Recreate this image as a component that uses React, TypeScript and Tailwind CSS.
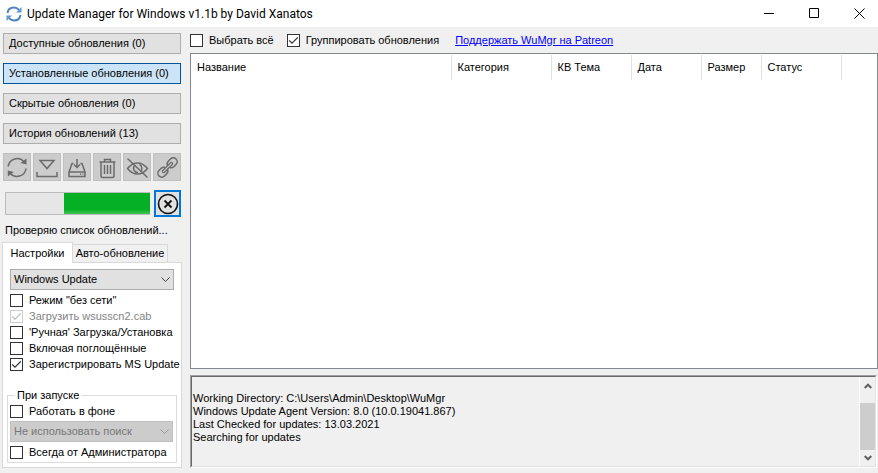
import { useState } from 'react';
import type { ReactNode } from 'react';
import clsx from 'clsx';

interface CheckProps {
  label: string;
  defaultChecked?: boolean;
  disabled?: boolean;
}

interface ToolButtonProps {
  title: string;
  children: ReactNode;
}

const views = [
  { id: 'available', label: 'Доступные обновления (0)' },
  { id: 'installed', label: 'Установленные обновления (0)' },
  { id: 'hidden', label: 'Скрытые обновления (0)' },
  { id: 'history', label: 'История обновлений (13)' },
];

const columns = [
  { label: 'Название', width: 'w-[260px]' },
  { label: 'Категория', width: 'w-[100px]' },
  { label: 'КВ Тема', width: 'w-[80px]' },
  { label: 'Дата', width: 'w-[70px]' },
  { label: 'Размер', width: 'w-[60px]' },
  { label: 'Статус', width: 'w-[80px]' },
];

const log = [
  '',
  'Working Directory: C:\\Users\\Admin\\Desktop\\WuMgr',
  'Windows Update Agent Version: 8.0 (10.0.19041.867)',
  'Last Checked for updates: 13.03.2021',
  'Searching for updates',
].join('\n');

function Check({ label, defaultChecked, disabled }: CheckProps) {
  return (
    <label className={clsx('flex h-4 items-center gap-1.5 whitespace-nowrap', disabled && 'text-[#838383]')}>
      <span className="relative h-[13px] w-[13px] shrink-0">
        <input
          type="checkbox"
          defaultChecked={defaultChecked}
          disabled={disabled}
          className="peer block h-[13px] w-[13px] appearance-none border border-[#333333] bg-white disabled:border-[#cccccc]"
        />
        <svg
          viewBox="0 0 13 13"
          className="pointer-events-none absolute inset-0 hidden h-[13px] w-[13px] peer-checked:block"
          fill="none"
          stroke={disabled ? '#bcbcbc' : '#333333'}
          strokeWidth="1.3"
        >
          <path d="M2.2 6.4 5 9.2 10.8 3.4" />
        </svg>
      </span>
      {label}
    </label>
  );
}

function ToolButton({ title, children }: ToolButtonProps) {
  return (
    <button title={title} className="flex h-7 w-7 items-center justify-center border border-[#bfbfbf] bg-[#cccccc]">
      <svg viewBox="0 0 24 24" className="h-6 w-6" fill="none" stroke="#6b6b6b" strokeWidth="1.5">
        {children}
      </svg>
    </button>
  );
}

function Combo({ value, label, disabled }: { value: string; label: string; disabled?: boolean }) {
  return (
    <div className="relative">
      <select
        aria-label={label}
        disabled={disabled}
        className="block h-[21px] w-full appearance-none border border-[#adadad] bg-[#e1e1e1] pl-[3px] disabled:border-[#bfbfbf] disabled:bg-[#cccccc] disabled:text-[#777777] disabled:opacity-100"
      >
        <option>{value}</option>
      </select>
      <svg
        viewBox="0 0 9 5"
        className="pointer-events-none absolute top-2 right-1 h-[5px] w-[9px]"
        fill="none"
        stroke={disabled ? '#999999' : '#444444'}
      >
        <path d="M.5.5l4 4 4-4" />
      </svg>
    </div>
  );
}

function TitleBar() {
  return (
    <header className="flex h-[27px] shrink-0 items-center bg-white pl-[6px]">
      <svg viewBox="0 0 16 16" className="h-4 w-4" fill="none" stroke="#4d85bd" strokeWidth="2">
        <path d="M1.5 7C2 3.5 4.700 1.500 8 1.500c2.200 0 3.700.9 4.900 2.300M14.500 9c-.5 3.500-3.200 5.500-6.500 5.500-2.200 0-3.700-.9-4.900-2.300" />
        <path d="M15.500 1v5.500H10zM.5 15V9.500H6z" fill="#5f98cf" stroke="none" />
      </svg>
      <h1 className="ml-[5px] flex-1 font-['Roboto',sans-serif] text-[12px] leading-4">
        Update Manager for Windows v1.1b by David Xanatos
      </h1>
      <button aria-label="Minimize" className="flex h-6 w-[45px] items-center justify-center">
        <svg viewBox="0 0 11 11" className="h-[11px] w-[11px]" stroke="#000000">
          <path d="M0 5.5h10" />
        </svg>
      </button>
      <button aria-label="Maximize" className="flex h-6 w-[45px] items-center justify-center">
        <svg viewBox="0 0 11 11" className="h-[11px] w-[11px]" fill="none" stroke="#000000">
          <path d="M.5.5h9v9h-9z" />
        </svg>
      </button>
      <button aria-label="Close" className="flex h-6 w-[41px] items-center justify-center pl-1">
        <svg viewBox="0 0 11 11" className="h-[11px] w-[11px]" fill="none" stroke="#000000">
          <path d="M.5.5l10 10M10.5.5l-10 10" />
        </svg>
      </button>
    </header>
  );
}

function Toolbar() {
  return (
    <div className="flex gap-[2px]">
      <ToolButton title="Поиск">
        <path d="M3.200 11.500a9 9 0 0 1 16-4.500M21 13.500a9 9 0 0 1-16 4.500" />
        <path d="M21.500 3.500V9.500L15.500 8zM2.800 21.500v-6l6 1.500z" fill="#6b6b6b" stroke="none" />
      </ToolButton>
      <ToolButton title="Загрузить">
        <path d="M5 5.500h14L12 13.500zM2 17v4.500h20V17" />
      </ToolButton>
      <ToolButton title="Установить">
        <path d="M12 4v8M9 9.500l3 3L15 9.500M8.500 8.500H7L4 17h16l-3-8.500h-1.500M4 17v4.500h16V17M15 19.300h1M17.500 19.300h1" />
      </ToolButton>
      <ToolButton title="Удалить">
        <path d="M4.500 7h16M9.500 7V4.500h6V7M6 7v14q0 1.500 1.500 1.500h10q1.500 0 1.500-1.500V7M9.500 10v9M12.500 10v9M15.500 10v9" />
      </ToolButton>
      <ToolButton title="Скрыть">
        <path d="M2.500 13.500Q7 8 12.500 8t10 5.500Q18 19 12.500 19t-10-5.500z" />
        <path d="M14.500 9.500a4.300 4.300 0 0 1 1 7M9.500 10.500a4.300 4.300 0 0 0 3.500 7" />
        <path d="M2.500 3.500l20 19" />
      </ToolButton>
      <ToolButton title="Получить ссылки">
        <g transform="rotate(-45 12.5 12.5)">
          <path d="M10.800 10.500A4 4 0 0 0 7.500 8.600H4.400a3.900 3.900 0 0 0 0 7.800h3.100a4 4 0 0 0 3.700-2.700M14.200 14.500a4 4 0 0 0 3.300 1.900h3.100a3.900 3.900 0 0 0 0-7.800h-3.100a4 4 0 0 0-3.700 2.700" />
          <path d="M7 12.500h11" strokeWidth="3.600" strokeLinecap="round" />
          <path d="M7 12.500h11" stroke="#cccccc" strokeWidth="1.200" strokeLinecap="round" />
        </g>
      </ToolButton>
    </div>
  );
}

function Settings() {
  const [tab, setTab] = useState('settings');

  return (
    <div className="-ml-px flex flex-1 flex-col">
      <div role="tablist" className="flex items-end">
        <button
          role="tab"
          aria-selected={tab === 'settings'}
          onClick={() => setTab('settings')}
          className="relative z-10 -mb-px h-[21px] w-[71px] border border-b-0 border-[#d9d9d9] bg-white"
        >
          Настройки
        </button>
        <button
          role="tab"
          aria-selected={tab === 'auto'}
          onClick={() => setTab('auto')}
          className="h-[18px] w-[95px] border border-b-0 border-l-0 border-[#d9d9d9] bg-[#f0f0f0]"
        >
          Авто-обновление
        </button>
      </div>
      <div className="flex w-[180px] flex-1 flex-col border border-[#d9d9d9] bg-white pt-[6px] pr-1 pb-1 pl-1">
        <div className="px-[3px]">
          <Combo label="Источник" value="Windows Update" />
          <div className="mt-[2px]">
            <Check label={'Режим "без сети"'} />
            <Check label="Загрузить wsusscn2.cab" defaultChecked disabled />
            <Check label="'Ручная' Загрузка/Установка" />
            <Check label="Включая поглощённые" />
            <Check label="Зарегистрировать MS Update" defaultChecked />
          </div>
        </div>
        <fieldset className="mt-[17px] border border-[#dcdcdc] pt-px pr-[3px] pb-[2px] pl-[2px]">
          <legend className="ml-[5px] px-[2px] leading-[13px]">При запуске</legend>
          <Check label="Работать в фоне" />
          <div className="my-[2px]">
            <Combo label="Автоматический поиск" value="Не использовать поиск" disabled />
          </div>
          <Check label="Всегда от Администратора" />
        </fieldset>
      </div>
    </div>
  );
}

function Sidebar() {
  const [view, setView] = useState('installed');

  return (
    <aside className="flex w-[190px] shrink-0 flex-col pt-[6px] pb-[5px] pl-[3px]">
      <nav className="flex w-[178px] flex-col gap-[9px]">
        {views.map((item) => (
          <button
            key={item.id}
            onClick={() => setView(item.id)}
            className={clsx(
              'h-[21px] border pl-[5px] text-left',
              view === item.id ? 'border-[#00559b] bg-[#cce4f7]' : 'border-[#adadad] bg-[#e1e1e1]'
            )}
          >
            {item.label}
          </button>
        ))}
        <Toolbar />
      </nav>
      <div className="mt-[9px] flex w-[178px] items-center justify-between pl-[2px]">
        <div role="progressbar" aria-label="Поиск" className="flex h-[23px] w-[145px] justify-end border border-r-0 border-[#bcbcbc] bg-[#e6e6e6]">
          <div className="h-full w-[86px] bg-linear-to-b from-[#06b025] from-80% to-[#3dc455]" />
        </div>
        <button aria-label="Отмена" className="flex h-[27px] w-[27px] items-center justify-center border-2 border-[#0078d7] bg-[#e1e1e1]">
          <svg viewBox="0 0 22 22" className="h-[22px] w-[22px] shrink-0" fill="none" stroke="#111111" strokeWidth="1.6">
            <circle cx="11" cy="11" r="9.5" />
            <path d="M7.5 7.5l7 7M14.500 7.500l-7 7" strokeWidth="1.8" />
          </svg>
        </button>
      </div>
      <p className="mt-[7px] mb-[5px] pl-[2px] leading-[13px]">Проверяю список обновлений...</p>
      <Settings />
    </aside>
  );
}

function UpdateList() {
  return (
    <div className="flex-1 overflow-hidden border border-[#828790] bg-white pt-px">
      <table className="w-full table-fixed border-collapse">
        <thead>
          <tr className="h-[25px]">
            {columns.map((column) => (
              <th key={column.label} className={clsx('border-r border-[#e2e2e2] pl-[6px] text-left font-normal', column.width)}>
                {column.label}
              </th>
            ))}
            <td />
          </tr>
        </thead>
        <tbody />
      </table>
    </div>
  );
}

function LogPane() {
  return (
    <div className="mr-px shrink-0 border border-t-[#a0a0a0] border-r-white border-b-white border-l-[#a0a0a0]">
      <div className="flex h-[91px] border border-t-[#696969] border-r-[#e3e3e3] border-b-[#e3e3e3] border-l-[#696969]">
        <textarea
          readOnly
          aria-label="Журнал"
          value={log}
          className="block h-full flex-1 resize-none overflow-hidden py-[2px] pl-px leading-[13px] outline-none"
        />
        <div className="flex w-4 flex-col items-center border-l border-white">
          <button aria-label="Вверх" className="flex h-[17px] w-full items-center justify-center">
            <svg viewBox="0 0 8 6" className="h-[6px] w-2" fill="none" stroke="#606060" strokeWidth="2">
              <path d="M.7 5 4 1.700 7.300 5" />
            </svg>
          </button>
          <div className="flex w-full flex-1 flex-col justify-end">
            <div className="h-[47px] bg-[#cdcdcd]" />
          </div>
          <button aria-label="Вниз" className="flex h-4 w-full items-center justify-center">
            <svg viewBox="0 0 8 6" className="h-[6px] w-2" fill="none" stroke="#606060" strokeWidth="2">
              <path d="M.7 1 4 4.300 7.300 1" />
            </svg>
          </button>
        </div>
      </div>
    </div>
  );
}

export default function App() {
  return (
    <div className="flex min-h-screen flex-col bg-[#f0f0f0] font-['Liberation_Sans',sans-serif] text-[11px] text-black">
      <TitleBar />
      <div className="flex flex-1">
        <Sidebar />
        <main className="flex min-w-0 flex-1 flex-col pb-[5px]">
          <div className="flex h-[26px] items-center">
            <Check label="Выбрать всё" />
            <div className="ml-[13px]">
              <Check label="Группировать обновления" defaultChecked />
            </div>
            <a href="#patreon" className="ml-4 text-[#0000ff] underline">
              Поддержать WuMgr на Patreon
            </a>
          </div>
          <UpdateList />
          <div className="h-[6px]" />
          <LogPane />
        </main>
      </div>
    </div>
  );
}
